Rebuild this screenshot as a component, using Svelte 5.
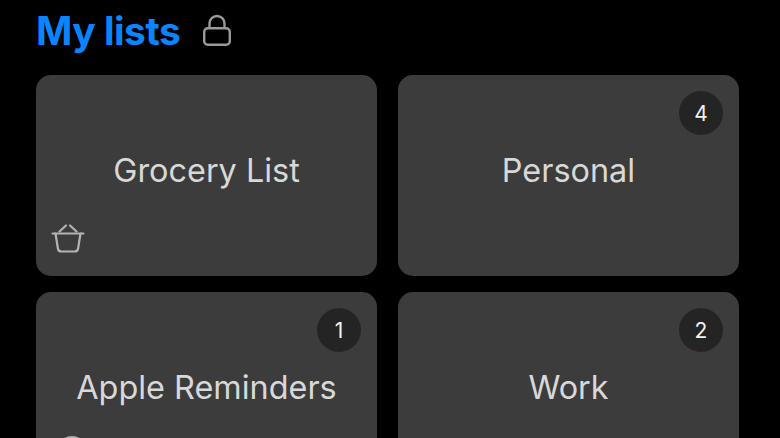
<script>
  const rows = [
    { name: 'Grocery List', icon: 'basket' },
    { name: 'Personal', badge: 4 },
    { name: 'Apple Reminders', badge: 1, icon: 'circle' },
    { name: 'Work', badge: 2 }
  ];
</script>

<div class="page">
  <header class="head">
    <h1>My lists</h1>
    <svg class="lock" width="30" height="34" viewBox="0 0 30 34" fill="none" stroke="#9a9a9a" stroke-width="2.4">
      <rect x="2.2" y="14.2" width="25.6" height="16.6" rx="3.6" />
      <path d="M7.5 14V9.5a7.5 7.5 0 0 1 15 0V14" />
    </svg>
  </header>
  <div class="grid">
    {#each rows as r}
      <div class="card">
        <span class="name">{r.name}</span>
        {#if r.badge}<span class="badge">{r.badge}</span>{/if}
        {#if r.icon === 'basket'}
          <svg class="basket" width="34" height="32" viewBox="0 0 34 32" fill="none" stroke="#b4b4b4" stroke-width="2.2" stroke-linecap="round" stroke-linejoin="round">
            <path d="M1.5 10.5h31" />
            <path d="M4.5 10.500l2.400 15a3.600 3.600 0 0 0 3.600 3h13a3.600 3.600 0 0 0 3.600-3l2.400-15" />
            <path d="M8.500 8.500l6.500-6M25.500 8.500l-6.500-6" />
          </svg>
        {/if}
        {#if r.icon === 'circle'}
          <span class="dot"></span>
        {/if}
      </div>
    {/each}
  </div>
</div>

<style>
  :global(body) {
    margin: 0;
    background: #000;
  }
  .page {
    width: 780px;
    height: 438px;
    overflow: hidden;
    background: #000;
    padding: 0 40px 0 36px;
    box-sizing: border-box;
    font-family: Inter, "Liberation Sans", sans-serif;
  }
  .head {
    height: 75px;
    display: flex;
    align-items: center;
    gap: 22px;
    padding-bottom: 14px;
    box-sizing: border-box;
  }
  h1 {
    margin: 0;
    font-size: 39px;
    font-weight: 650;
    color: #0a84ff;
    letter-spacing: -0.5px;
    line-height: 1;
  }
  .lock {
    display: block;
  }
  .grid {
    display: grid;
    grid-template-columns: 341px 341px;
    grid-auto-rows: 201px;
    column-gap: 21px;
    row-gap: 16px;
  }
  .card {
    position: relative;
    background: #3c3c3c;
    border-radius: 15px;
    display: flex;
    align-items: center;
    justify-content: center;
  }
  .name {
    font-size: 32.4px;
    font-weight: 400;
    color: #d8d8d8;
    position: relative;
    top: -5px;
  }
  .badge {
    position: absolute;
    top: 16px;
    right: 16px;
    width: 44px;
    height: 44px;
    border-radius: 50%;
    background: #242424;
    color: #f2f2f2;
    font-size: 21px;
    display: flex;
    align-items: center;
    justify-content: center;
  }
  .basket {
    position: absolute;
    left: 15px;
    bottom: 21px;
  }
  .dot {
    position: absolute;
    left: 21px;
    top: 144px;
    width: 30px;
    height: 30px;
    border-radius: 50%;
    border: 2px solid #b4b4b4;
    box-sizing: border-box;
  }
</style>
